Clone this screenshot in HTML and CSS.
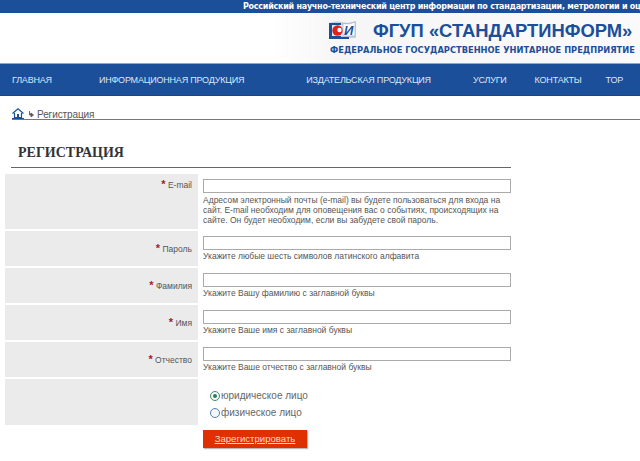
FILE: index.html
```html
<!DOCTYPE html>
<html lang="ru">
<head>
  <meta charset="UTF-8" />
  <title>Регистрация</title>
  <link rel="stylesheet" href="styles.css">
</head>
<body>

<div class="top-bar">Российский научно-технический центр информации по стандартизации, метрологии и оц</div>

<div class="header">
  <svg class="logo" width="28" height="22" viewBox="0 0 28 22">
    <path d="M0 3 Q7 0 13 2 T27 1 V18 H0 Z" fill="#c9d3e0"/>
    <path d="M0 3 H12 V18 H0 Z" fill="#1b4f9a"/>
    <path d="M3 5 H14 V16 H3 Z" fill="#e6e9ee"/>
    <circle cx="8.5" cy="10.5" r="5.2" fill="#d8261c"/>
    <circle cx="10.5" cy="10" r="2.2" fill="#fff"/>
    <path d="M14 3.5 Q20 5 26 2 V16 H14 Z" fill="#fff" stroke="#8fa6c6" stroke-width="0.6"/>
    <text class="logo-letter" x="15" y="15">И</text>
    <rect x="0" y="17" width="20" height="2" fill="#1b4f9a"/>
  </svg>
  <div class="brand">
    <div class="brand-name">ФГУП «СТАНДАРТИНФОРМ»</div>
    <div class="brand-sub">ФЕДЕРАЛЬНОЕ ГОСУДАРСТВЕННОЕ УНИТАРНОЕ ПРЕДПРИЯТИЕ</div>
  </div>
</div>

<div class="nav">
  <a class="nav-main">ГЛАВНАЯ</a>
  <a class="nav-info">ИНФОРМАЦИОННАЯ ПРОДУКЦИЯ</a>
  <a class="nav-pub">ИЗДАТЕЛЬСКАЯ ПРОДУКЦИЯ</a>
  <a class="nav-serv">УСЛУГИ</a>
  <a class="nav-cont">КОНТАКТЫ</a>
  <a>ТОР</a>
</div>

<div class="crumbs">
  <svg class="crumb-home" width="12" height="11" viewBox="0 0 12 11">
    <path d="M0.5 5.5 L6 0.8 L11.5 5.5" fill="none" stroke="#1b4f9a" stroke-width="1.2"/>
    <path d="M2.5 5 V9.5 H9.5 V5" fill="none" stroke="#1b4f9a" stroke-width="1.2"/>
    <rect x="5" y="6" width="2" height="3.5" fill="#1b4f9a"/>
    <rect x="0" y="10" width="12" height="1" fill="#1b4f9a"/>
  </svg>
  <svg class="crumb-arrow" width="6" height="7" viewBox="0 0 6 7">
    <path d="M1.5 0 V4 H3 M3 2 L5.5 4 L3 6 Z" fill="#555" stroke="#555" stroke-width="0.8"/>
  </svg>
  <span class="crumb-text">Регистрация</span>
</div>

<h1 class="title">РЕГИСТРАЦИЯ</h1>

<form class="form">
  <div class="row row-email">
    <label class="label"><b>*</b> E-mail</label>
    <div class="field">
      <input type="text">
      <p>Адресом электронный почты (e-mail) вы будете пользоваться для входа на сайт. E-mail необходим для оповещения вас о событиях, происходящих на сайте. Он будет необходим, если вы забудете свой пароль.</p>
    </div>
  </div>
  <div class="row">
    <label class="label"><b>*</b> Пароль</label>
    <div class="field">
      <input type="text">
      <p>Укажите любые шесть символов латинского алфавита</p>
    </div>
  </div>
  <div class="row">
    <label class="label"><b>*</b> Фамилия</label>
    <div class="field">
      <input type="text">
      <p>Укажите Вашу фамилию с заглавной буквы</p>
    </div>
  </div>
  <div class="row">
    <label class="label"><b>*</b> Имя</label>
    <div class="field">
      <input type="text">
      <p>Укажите Ваше имя с заглавной буквы</p>
    </div>
  </div>
  <div class="row">
    <label class="label"><b>*</b> Отчество</label>
    <div class="field">
      <input type="text">
      <p>Укажите Ваше отчество с заглавной буквы</p>
    </div>
  </div>
  <div class="row row-type">
    <div class="label"></div>
    <div class="types">
      <label class="type"><span class="radio radio-on"></span>юридическое лицо</label>
      <label class="type"><span class="radio"></span>физическое лицо</label>
    </div>
  </div>
  <a class="submit">Зарегистрировать</a>
</form>

</body>
</html>
```

FILE: styles.css
```css
* {
  box-sizing: border-box;
  margin: 0;
  padding: 0;
}

body {
  font-family: 'Liberation Sans', Arial, sans-serif;
  background: #fff;
  color: #444;
  width: 640px;
  height: 461px;
  overflow: hidden;
}

.top-bar {
  height: 13px;
  background: #1b4f9a;
  color: #fff;
  font-family: 'DejaVu Sans', sans-serif;
  font-size: 8px;
  font-weight: bold;
  letter-spacing: -0.25px;
  line-height: 13px;
  padding-left: 243px;
  white-space: nowrap;
}

.header {
  height: 51px;
  display: flex;
  align-items: flex-start;
  padding: 7px 0 0 329px;
  background: linear-gradient(90deg, #fff 270px, #f6f6f6 340px, #fafafa 640px);
  border-bottom: 1px solid #8fa6c6;
}

.logo {
  flex: none;
}

.logo-letter {
  font-family: 'Liberation Sans', sans-serif;
  font-size: 13px;
  font-weight: bold;
  font-style: italic;
  fill: #1b4f9a;
}

.brand {
  margin-left: -28px;
  white-space: nowrap;
}

.brand-name {
  color: #1b4f9a;
  font-weight: bold;
  font-size: 18.4px;
  line-height: 22px;
  padding-left: 44px;
}

.brand-sub {
  color: #1b4f9a;
  font-family: 'DejaVu Sans', sans-serif;
  font-weight: bold;
  font-size: 8.3px;
  line-height: 12px;
  margin-top: 2px;
  padding-left: 1px;
}

.nav {
  height: 32px;
  background: #1b4f9a;
  border-bottom: 1px solid #174585;
  color: #dfe7f2;
  font-size: 9px;
  letter-spacing: -0.2px;
  line-height: 32px;
  display: flex;
  padding-left: 12px;
  white-space: nowrap;
}

.nav-main { margin-right: 47px; }
.nav-info { margin-right: 62px; }
.nav-pub { margin-right: 42px; }
.nav-serv { margin-right: 28px; }
.nav-cont { margin-right: 24px; }

.crumbs {
  height: 24px;
  margin-left: 12px;
  border-bottom: 1px solid #777;
  display: flex;
  align-items: flex-end;
  font-size: 10px;
  letter-spacing: -0.1px;
  color: #555;
}

.crumb-arrow {
  margin: 0 3px 1px 4px;
}

.crumb-text {
  line-height: 8px;
}

.title {
  margin: 19px 129px 0 11px;
  height: 29px;
  padding-left: 7px;
  border-bottom: 1px solid #666;
  font-family: 'Liberation Serif', serif;
  font-size: 14px;
  line-height: 28px;
  color: #333;
}

.form {
  margin: 6px 0 0 5px;
  width: 506px;
}

.row {
  display: flex;
  height: 35px;
  margin-bottom: 2px;
}

.row-email {
  height: 55px;
}

.row-type {
  height: 46px;
}

.label {
  width: 193px;
  background: #ebebeb;
  text-align: right;
  font-size: 8.5px;
  padding: 4px 6px 0 0;
  flex: none;
  color: #555;
}

.row:not(.row-email) .label {
  padding-top: 11px;
}

.label b {
  color: #a01c2c;
  font-size: 11px;
}

.field {
  margin-left: 5px;
  width: 308px;
  padding-top: 5px;
}

.field input {
  display: block;
  width: 308px;
  height: 14px;
  border: 1px solid #aaa;
  background: #fff;
}

.field p {
  font-size: 8.5px;
  line-height: 10px;
  padding-top: 1px;
  color: #555;
}

.row-email .field p {
  padding-top: 2px;
}

.types {
  margin-left: 12px;
  padding-top: 8px;
  font-size: 10px;
  color: #666;
}

.type {
  display: flex;
  align-items: center;
  height: 17px;
}

.radio {
  width: 10px;
  height: 10px;
  border-radius: 50%;
  border: 1px solid #5a7ea6;
  background: #f4f6fa;
  margin-right: 1px;
  position: relative;
}

.radio-on {
  border-color: #3f8a68;
}

.radio-on::after {
  content: '';
  position: absolute;
  left: 2px;
  top: 2px;
  width: 4px;
  height: 4px;
  border-radius: 50%;
  background: #2f7a58;
}

.submit {
  display: block;
  width: 104px;
  height: 18px;
  margin: 5px 0 0 198px;
  background: #e03000;
  color: #f6d9c8;
  font-size: 9.6px;
  line-height: 18px;
  text-align: center;
  text-decoration: underline;
  box-shadow: 1px 1px 1px #bbb;
}
```
